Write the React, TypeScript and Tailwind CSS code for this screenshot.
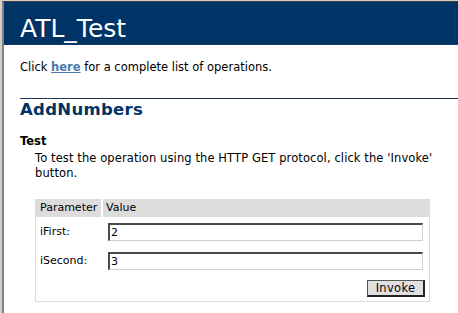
export default function App() {
  return (
    <div className="w-[458px] h-[313px] overflow-hidden bg-white">
      <div className="h-full border-l-2 border-t border-[#d4d0c8]">
        <div className="h-full border-l-2 border-t border-l-[#808080] border-t-[#404040] bg-white font-['DejaVu_Sans',sans-serif] text-black">
          <div className="h-[43px] bg-[#003366] pl-[16px] pt-[12.5px] text-[25px] leading-[28px] text-white border-b border-[#0f3f6f]">
            ATL_Test
          </div>
          <div className="pl-[16px]">
            <p className="mt-[15px] text-[11.5px] leading-[14px]">
              Click <a className="font-bold text-[#4a7aab] underline">here</a> for a complete list of operations.
            </p>
            <div className="mt-[24px] h-px bg-[#1f3550]" />
            <h2 className="mt-[1px] text-[16.5px] leading-[19px] font-bold text-[#003366] tracking-[0.3px]">
              AddNumbers
            </h2>
            <h3 className="mt-[15px] text-[11.5px] leading-[14px] font-bold">Test</h3>
            <div className="ml-[15px]">
              <p className="mt-[3px] w-[420px] text-[11.5px] leading-[15px] tracking-[0.1px]">
                To test the operation using the HTTP GET protocol, click the 'Invoke' button.
              </p>
              <div className="mt-[18px] w-[395px] text-[11px]">
                <div className="flex h-[18px] bg-[#dcdcdc] leading-[18px]">
                  <div className="w-[68px] border-r-2 border-white pl-[5px]">Parameter</div>
                  <div className="pl-[3px]">Value</div>
                </div>
                <div className="border-x border-b border-[#dcdcdc] pt-[6px] pb-[4px]">
                  <div className="flex items-center h-[18px]">
                    <div className="w-[72px] pl-[4px]">iFirst:</div>
                    <input
                      readOnly
                      value="2"
                      className="h-[18px] w-[315px] border-t-2 border-l-2 border-r border-b border-t-[#4a4a4a] border-l-[#4a4a4a] border-r-[#d4d0c8] border-b-[#d4d0c8] pl-[1px] text-[11px] leading-[14px] outline-none font-['DejaVu_Sans',sans-serif]"
                    />
                  </div>
                  <div className="mt-[11px] flex items-center h-[18px]">
                    <div className="w-[72px] pl-[4px]">iSecond:</div>
                    <input
                      readOnly
                      value="3"
                      className="h-[18px] w-[315px] border-t-2 border-l-2 border-r border-b border-t-[#4a4a4a] border-l-[#4a4a4a] border-r-[#d4d0c8] border-b-[#d4d0c8] pl-[1px] text-[11px] leading-[14px] outline-none font-['DejaVu_Sans',sans-serif]"
                    />
                  </div>
                  <div className="mt-[10px] flex justify-end pr-[4px]">
                    <button className="h-[17px] w-[58px] bg-[#e0e0e0] border border-[#555] border-r-2 border-b-2 border-r-[#222] border-b-[#222] text-[11.5px] leading-[13px] tracking-[0.3px] font-['DejaVu_Sans',sans-serif]">
                      Invoke
                    </button>
                  </div>
                </div>
              </div>
            </div>
          </div>
        </div>
      </div>
    </div>
  );
}
